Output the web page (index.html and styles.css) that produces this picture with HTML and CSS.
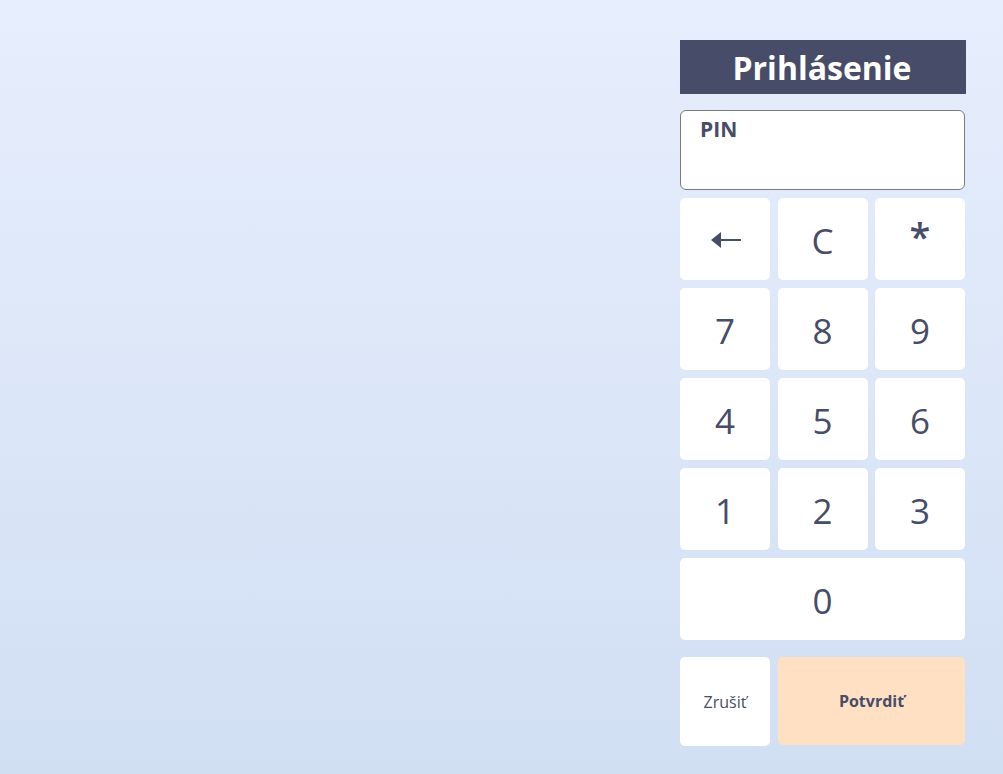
FILE: index.html
```html
<!DOCTYPE html>
<html lang="sk">
<head>
<meta charset="utf-8">
<title>Prihlásenie</title>
<link rel="stylesheet" href="styles.css">
</head>
<body>
<div class="page">
  <div class="panel">
    <div class="title">Prihlásenie</div>
    <div class="pin-field"><span class="pin-label">PIN</span></div>
    <div class="keypad">
      <div class="key"><svg class="arrow" width="30" height="16" viewBox="0 0 30 16"><path d="M0 8 L10 0 L10 16 Z" fill="#474c68"/><rect x="8" y="7" width="22" height="2" fill="#474c68"/></svg></div>
      <div class="key">C</div>
      <div class="key star">*</div>
      <div class="key">7</div>
      <div class="key">8</div>
      <div class="key">9</div>
      <div class="key">4</div>
      <div class="key">5</div>
      <div class="key">6</div>
      <div class="key">1</div>
      <div class="key">2</div>
      <div class="key">3</div>
      <div class="key wide">0</div>
    </div>
    <div class="actions">
      <div class="btn cancel">Zrušiť</div>
      <div class="btn confirm">Potvrdiť</div>
    </div>
  </div>
</div>
</body>
</html>
```
FILE: styles.css
```css
html, body {
  margin: 0;
  padding: 0;
  height: 100%;
}
body {
  background: linear-gradient(to bottom, #e7eefd 0%, #d1dff3 100%);
  font-family: "Open Sans", "DejaVu Sans", sans-serif;
  color: #474c68;
}
.page {
  display: flex;
  justify-content: flex-end;
  padding: 40px 37px 0 0;
}
.panel {
  width: 286px;
  display: flex;
  flex-direction: column;
}
.title {
  height: 54px;
  background: #474c68;
  color: #ffffff;
  font-weight: 700;
  font-size: 32px;
  display: flex;
  align-items: center;
  justify-content: center;
  padding-right: 2px;
  box-sizing: border-box;
}
.pin-field {
  margin-top: 16px;
  width: 285px;
  height: 80px;
  box-sizing: border-box;
  background: #ffffff;
  border: 1px solid #7b7b7b;
  border-radius: 6px;
  padding: 4px 0 0 19px;
}
.pin-label {
  font-weight: 700;
  font-size: 21px;
  line-height: 28px;
}
.keypad {
  margin-top: 8px;
  width: 285px;
  display: grid;
  grid-template-columns: 90px 90px 90px;
  justify-content: space-between;
  grid-auto-rows: 82px;
  row-gap: 8px;
}
.key {
  background: #ffffff;
  border-radius: 5px;
  display: flex;
  align-items: center;
  justify-content: center;
  font-size: 35px;
  line-height: 1;
  padding-top: 2px;
  box-sizing: border-box;
}
.key.star {
  align-items: flex-start;
  padding-top: 19px;
  font-size: 38px;
  font-weight: 600;
}
.key.wide {
  grid-column: 1 / 4;
}
.arrow {
  display: block;
  margin-left: 2px;
}
.actions {
  margin-top: 17px;
  width: 285px;
  display: flex;
  gap: 8px;
}
.btn {
  height: 89px;
  border-radius: 5px;
  display: flex;
  align-items: center;
  justify-content: center;
  font-size: 16px;
}
.cancel {
  width: 90px;
  background: #ffffff;
}
.confirm {
  flex: 1;
  background: #ffe0c2;
  font-weight: 700;
  height: 88px;
}
```
